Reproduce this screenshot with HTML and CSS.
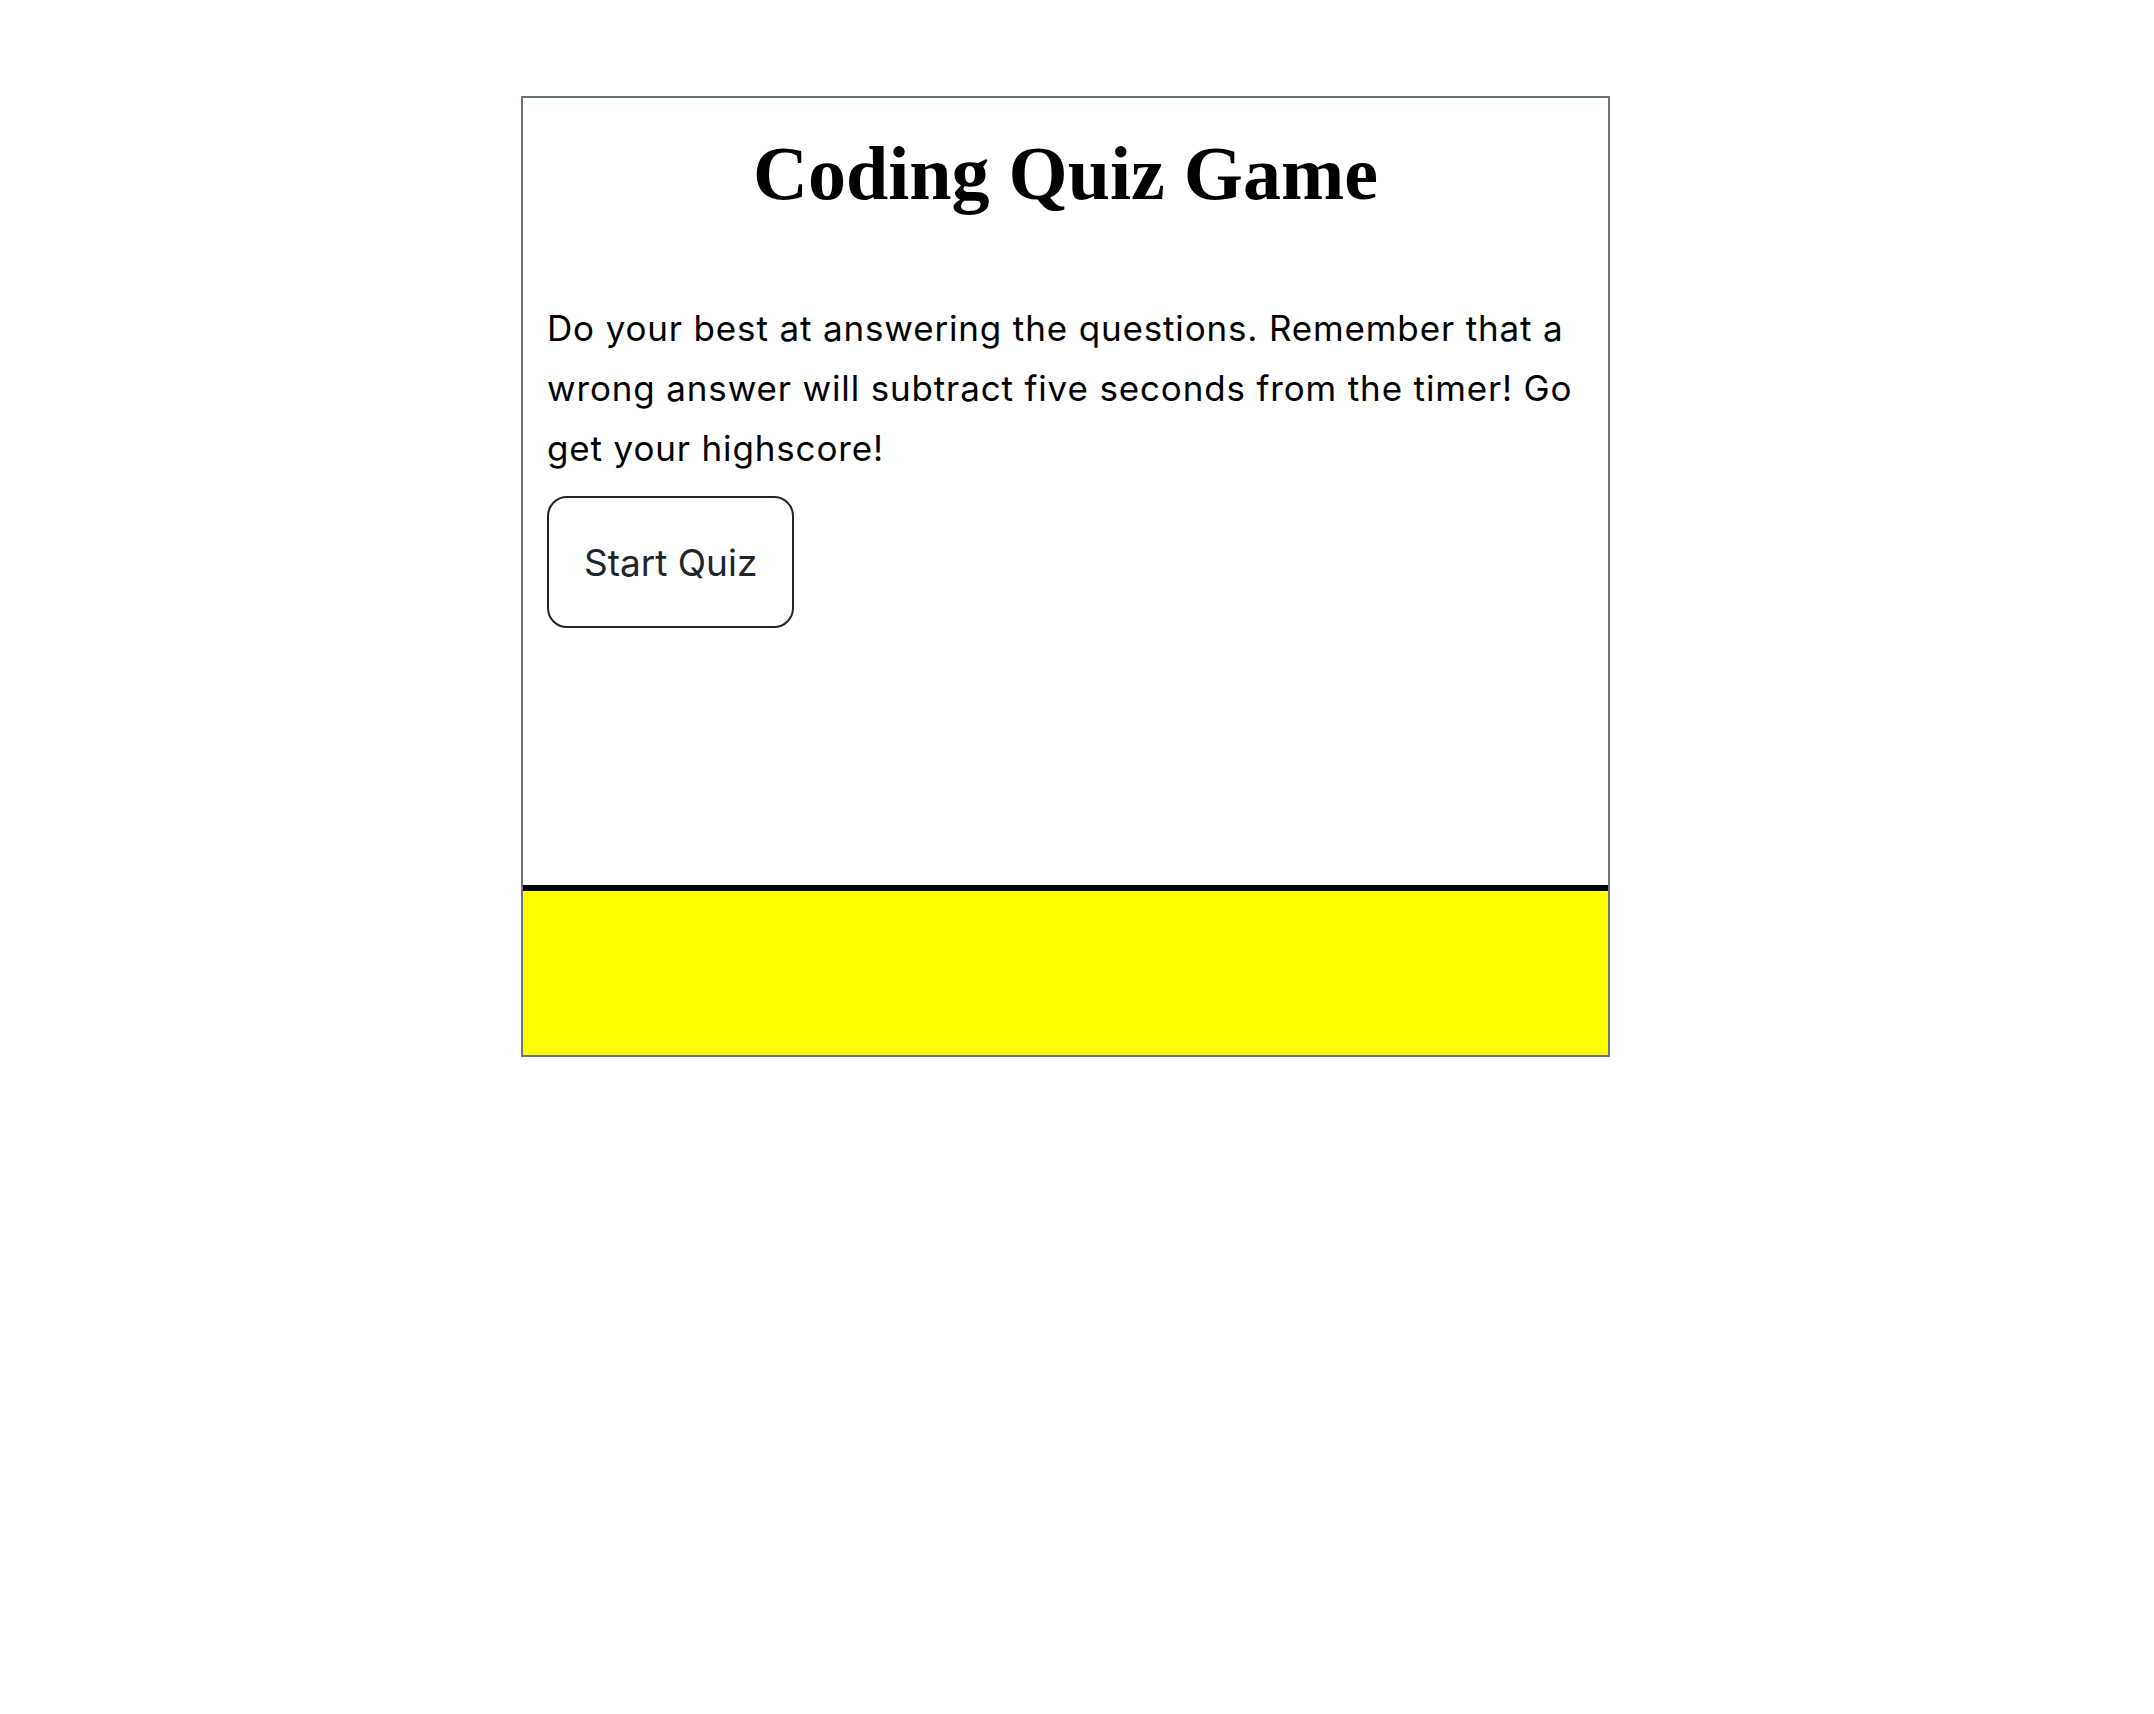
FILE: index.html
```html
<!DOCTYPE html>
<html lang="en">
<head>
<meta charset="utf-8">
<title>Coding Quiz Game</title>
<link rel="stylesheet" href="styles.css">
</head>
<body>
  <div class="quiz-card">
    <section class="quiz-main">
      <h1 class="quiz-title">Coding Quiz Game</h1>
      <p class="quiz-intro">Do your best at answering the questions. Remember that a wrong answer will subtract five seconds from the timer! Go get your highscore!</p>
      <button class="start-btn" type="button">Start Quiz</button>
    </section>
    <footer class="quiz-footer"></footer>
  </div>
</body>
</html>
```

FILE: styles.css
```css
html, body {
  margin: 0;
  padding: 0;
  background: #fff;
}

.quiz-card {
  margin: 96px 0 0 521px;
  width: 1085px;
  border: 2px solid #6c757d;
}

.quiz-main {
  height: 787px;
  box-sizing: border-box;
  padding: 31px 24px 0 24px;
}

.quiz-title {
  margin: 0;
  text-align: center;
  font-family: "Liberation Serif", "Times New Roman", serif;
  font-weight: bold;
  font-size: 76px;
  line-height: 88px;
  color: #000;
}

.quiz-intro {
  margin: 81px 0 18px 0;
  font-family: Inter, "Noto Sans", sans-serif;
  font-size: 35px;
  letter-spacing: 0.85px;
  line-height: 60px;
  color: #000;
}

.start-btn {
  display: block;
  margin: 0;
  padding: 0 35px;
  height: 132px;
  background: #fff;
  border: 2px solid #212529;
  border-radius: 20px;
  font-family: Inter, "Noto Sans", sans-serif;
  font-size: 37px;
  color: #212529;
}

.quiz-footer {
  border-top: 6px solid #000;
  height: 164px;
  background: #ffff00;
}
```
